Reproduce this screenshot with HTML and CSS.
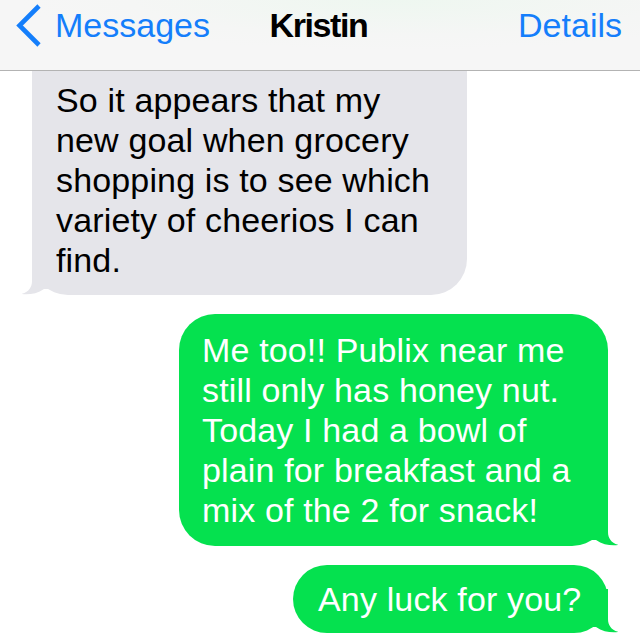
FILE: index.html
```html
<!DOCTYPE html>
<html lang="en">
<head>
<meta charset="utf-8">
<title>Kristin</title>
<link rel="stylesheet" href="styles.css">
</head>
<body>
<div class="screen">
  <header class="nav">
    <a class="nav-back">
      <svg class="chevron" width="26" height="44" viewBox="0 0 26 44"><path d="M24 2 L4.5 21.5 L24 41" fill="none" stroke="#147efb" stroke-width="4.6" stroke-linejoin="miter"/></svg>
      <span>Messages</span>
    </a>
    <div class="nav-title">Kristin</div>
    <a class="nav-details">Details</a>
  </header>
  <main class="thread">
    <div class="bubble in first">
      So it appears that my<br>new goal when grocery<br>shopping is to see which<br>variety of cheerios I can<br>find.
      <svg class="tail tail-in" width="44" height="44" viewBox="-34 -44 44 44"><path d="M0 -44 L0 -14 C0 -8 3 -3 10.5 -1 C4 0 -5 -1 -12 -6 L-34 -6 L-34 -44 Z"/></svg>
    </div>
    <div class="bubble out wide">
      Me too!! Publix near me<br>still only has honey nut.<br>Today I had a bowl of<br>plain for breakfast and a<br>mix of the 2 for snack!
      <svg class="tail tail-out" width="44" height="44" viewBox="-34 -44 44 44"><path d="M0 -44 L0 -14 C0 -8 3 -3 10.5 -1 C4 0 -5 -1 -12 -6 L-34 -6 L-34 -44 Z"/></svg>
    </div>
    <div class="bubble out short">
      Any luck for you?
      <svg class="tail tail-out" width="44" height="44" viewBox="-34 -44 44 44"><path d="M0 -44 L0 -14 C0 -8 3 -3 10.5 -1 C4 0 -5 -1 -12 -6 L-34 -6 L-34 -44 Z"/></svg>
    </div>
  </main>
</div>
</body>
</html>
```
FILE: styles.css
```css
html, body {
  margin: 0;
  padding: 0;
  background: #ffffff;
  width: 640px;
  height: 642px;
  overflow: hidden;
}

.screen {
  font-family: "Liberation Sans", Arial, sans-serif;
  font-size: 34px;
  line-height: 40px;
}

.nav {
  box-sizing: border-box;
  height: 71px;
  padding: 5px 18px 0 15px;
  border-bottom: 1px solid #b3b3b3;
  background: radial-gradient(ellipse 380px 50px at 62% 0, #eef7f0 0%, #f5f6f5 70%, #f6f6f6 100%);
  display: grid;
  grid-template-columns: 1fr auto 1fr;
  align-items: start;
}

.nav-back {
  display: flex;
  align-items: flex-start;
  color: #147efb;
  gap: 14px;
}

.chevron {
  display: block;
  margin-top: -1px;
}

.nav-title {
  font-weight: bold;
  color: #000;
  letter-spacing: -1.4px;
}

.nav-details {
  justify-self: end;
  color: #147efb;
}

.thread {
  display: flex;
  flex-direction: column;
  gap: 19px;
}

.bubble {
  position: relative;
  z-index: 0;
  box-sizing: border-box;
  border-radius: 36px;
  letter-spacing: 0.15px;
}

.bubble.in {
  background: #e5e5ea;
  color: #000;
  margin-left: 32px;
  align-self: flex-start;
}

.bubble.first {
  width: 435px;
  padding: 9px 10px 15px 24px;
  border-top-left-radius: 0;
  border-top-right-radius: 0;
}

.bubble.out {
  background: #05e14f;
  color: #fff;
  align-self: flex-end;
  margin-right: 32px;
}

.bubble.wide {
  width: 429px;
  padding: 16px 10px 16px 23px;
}

.bubble.short {
  width: 315px;
  padding: 14px 10px 14px 25px;
  border-radius: 34px;
}

.tail {
  position: absolute;
  z-index: -1;
  bottom: 0;
  display: block;
}

.tail-out {
  right: -10px;
  fill: #05e14f;
}

.tail-in {
  left: -10px;
  fill: #e5e5ea;
  transform: scaleX(-1);
}
```
